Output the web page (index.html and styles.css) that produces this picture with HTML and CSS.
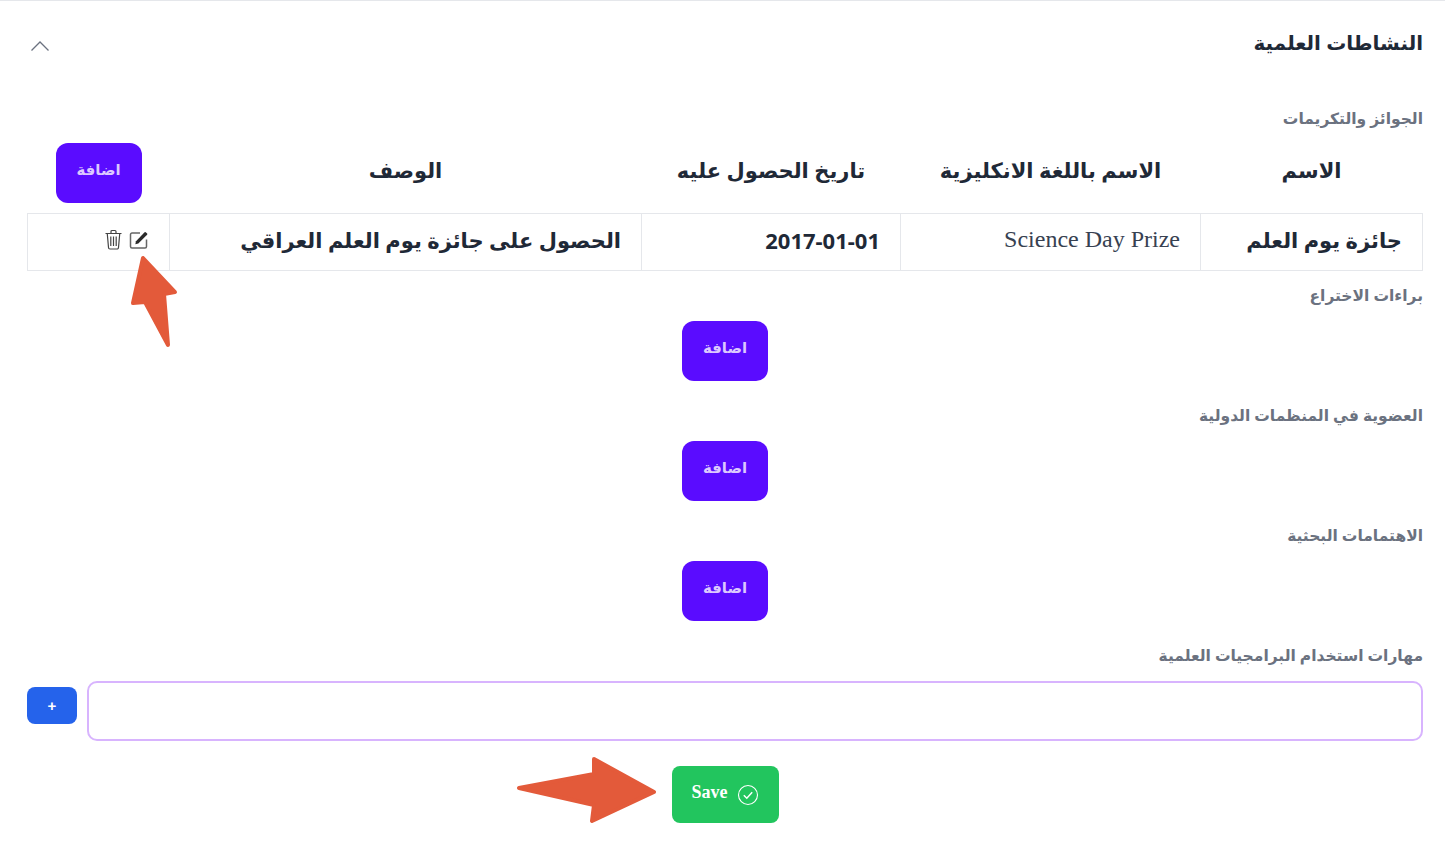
FILE: index.html
```html
<!DOCTYPE html>
<html lang="ar" dir="rtl">
<head>
  <meta charset="UTF-8" />
  <title>النشاطات العلمية</title>
  <link rel="stylesheet" href="styles.css">
</head>
<body>
  <div class="panel">
    <div class="panel-head">
      <h1>النشاطات العلمية</h1>
      <svg class="chevron" width="20" height="12" viewBox="0 0 20 12"><path d="M1.5 10.5 10 2l8.500 8.500" fill="none" stroke="#6b7280" stroke-width="1.300"/></svg>
    </div>

    <div class="group-label first">الجوائز والتكريمات</div>
    <table class="awards">
      <thead>
        <tr>
          <th class="col-name">الاسم</th>
          <th class="col-en">الاسم باللغة الانكليزية</th>
          <th class="col-date">تاريخ الحصول عليه</th>
          <th class="col-desc">الوصف</th>
          <th class="col-act"><button class="add-btn">اضافة</button></th>
        </tr>
      </thead>
      <tbody>
        <tr>
          <td>جائزة يوم العلم</td>
          <td class="latin">Science Day Prize</td>
          <td class="date">2017-01-01</td>
          <td>الحصول على جائزة يوم العلم العراقي</td>
          <td>
            <div class="row-actions">
              <svg width="20" height="20" viewBox="0 0 20 20">
                <path d="M17.500 9.500V16.500a1.500 1.500 0 0 1-1.500 1.500H3A1.500 1.500 0 0 1 1.500 16.500V4.500A1.500 1.500 0 0 1 3 3H11" fill="none" stroke="#666" stroke-width="1.500"/>
                <path d="M7 11.200 15.600 2.200a.8.8 0 0 1 1.100 0l1.400 1.400a.8.8 0 0 1 0 1.100L9.300 13.500 6.300 14.200z" fill="#2b2b2b"/>
              </svg>
              <svg width="19" height="21" viewBox="0 0 18 21">
                <path d="M1 4.500H17M6.500 4V2.500A1 1 0 0 1 7.500 1.500H10.500A1 1 0 0 1 11.500 2.500V4M2.800 5 4 18.500A1.500 1.500 0 0 0 5.500 20H12.500A1.500 1.500 0 0 0 14 18.500L15.200 5M6.300 7.500V17M9 7.500V17M11.700 7.500V17" fill="none" stroke="#444" stroke-width="1.200"/>
              </svg>
            </div>
          </td>
        </tr>
      </tbody>
    </table>

    <section class="group after-table">
      <div class="group-label">براءات الاختراع</div>
      <button class="add-btn">اضافة</button>
    </section>
    <section class="group">
      <div class="group-label">العضوية في المنظمات الدولية</div>
      <button class="add-btn">اضافة</button>
    </section>
    <section class="group">
      <div class="group-label">الاهتمامات البحثية</div>
      <button class="add-btn">اضافة</button>
    </section>

    <div class="group-label skills-label">مهارات استخدام البرامجيات العلمية</div>
    <div class="skills-row">
      <input class="skills-input" type="text" />
      <button class="plus-btn">+</button>
    </div>

    <div class="save-row">
      <button class="save-btn">
        <span>Save</span>
        <svg width="22" height="22" viewBox="0 0 22 22"><circle cx="11" cy="11" r="9.500" fill="none" stroke="#fff" stroke-width="1.100"/><path d="M6.800 11.300 9.800 14.200 15.200 8.300" fill="none" stroke="#fff" stroke-width="1.500"/></svg>
      </button>
    </div>
  </div>

  <!-- red annotation arrows drawn over the page -->
  <svg class="annotations" width="1445" height="867" viewBox="0 0 1445 867">
    <path d="M143 258 175 292 164 294 168 345 145 302 133 303z" fill="#e35a3a" stroke="#e35a3a" stroke-width="4" stroke-linejoin="round"/>
    <path d="M519 788 594 774 594 759 654 792 592 821 594 805z" fill="#e35a3a" stroke="#e35a3a" stroke-width="4" stroke-linejoin="round"/>
  </svg>
</body>
</html>
```

FILE: styles.css
```css
body {
  margin: 0;
  background: #fff;
  color: #1f2937;
  font-family: "Noto Sans", "DejaVu Sans", sans-serif;
}

.panel {
  border-top: 1px solid #e5e7eb;
  padding: 0 22px 44px 27px;
}

.panel-head {
  display: flex;
  align-items: center;
  justify-content: space-between;
  height: 82px;
  padding-bottom: 2px;
  padding-left: 3px;
}

h1 {
  margin: 0;
  font-size: 20px;
  font-weight: 700;
  color: #1f2937;
}

.chevron {
  margin-top: 8px;
}

.group-label {
  height: 24px;
  line-height: 24px;
  font-size: 15.500px;
  font-weight: 600;
  color: #6b7280;
  margin-bottom: 13px;
}

.group-label.first {
  margin-top: 21px;
}

.awards {
  width: 1395px;
  border-collapse: collapse;
  table-layout: fixed;
}

.awards th {
  padding: 0 0 10px;
  font-size: 21px;
  font-weight: 600;
  line-height: 54px;
  vertical-align: top;
  color: #1f2937;
}

.awards td {
  height: 51px;
  padding: 0 20px 5px;
  border: 1px solid #e5e7eb;
  font-size: 21px;
  font-weight: 600;
  color: #1f2937;
}

.col-name { width: 222px; }
.col-en { width: 300px; }
.col-date { width: 259px; }
.col-desc { width: 472px; }
.col-act { width: 142px; }

.awards td.latin {
  font-family: "Liberation Serif", serif;
  font-weight: 400;
  font-size: 24px;
  color: #374151;
}

.awards td.date {
  font-size: 22px;
  font-weight: 700;
}

.row-actions {
  display: flex;
  align-items: center;
  gap: 6px;
}

.add-btn {
  display: block;
  width: 86px;
  height: 60px;
  margin: 0 auto;
  padding: 0 0 8px;
  border: none;
  border-radius: 12px;
  background: #5a0cff;
  color: #dcc8ff;
  font-family: inherit;
  font-size: 15px;
  font-weight: 700;
}

.group {
  padding-bottom: 24px;
}

.group .group-label,
.skills-label {
  line-height: 21px;
}

.group .group-label {
  margin-bottom: 12px;
}

.skills-label {
  margin-bottom: 12px;
}

.after-table {
  margin-top: 14px;
}

.skills-row {
  display: flex;
  gap: 10px;
  align-items: flex-start;
}

.skills-input {
  flex: 1;
  height: 60px;
  box-sizing: border-box;
  border: 2px solid #d8b4fe;
  border-radius: 10px;
  background: #fff;
}

.plus-btn {
  width: 50px;
  height: 37px;
  margin-top: 6px;
  border: none;
  border-radius: 8px;
  background: #2563eb;
  color: #fff;
  font-size: 15px;
  font-weight: 700;
}

.save-row {
  display: flex;
  justify-content: center;
  margin-top: 25px;
}

.save-btn {
  display: flex;
  align-items: center;
  justify-content: center;
  gap: 9px;
  width: 107px;
  height: 57px;
  border: none;
  border-radius: 8px;
  background: #22c55e;
  color: #fff;
  font-family: "Liberation Serif", serif;
  font-size: 18px;
  font-weight: 700;
  direction: ltr;
}

.save-btn span {
  padding-bottom: 4px;
}

.annotations {
  position: absolute;
  top: 0;
  left: 0;
  pointer-events: none;
}
```
